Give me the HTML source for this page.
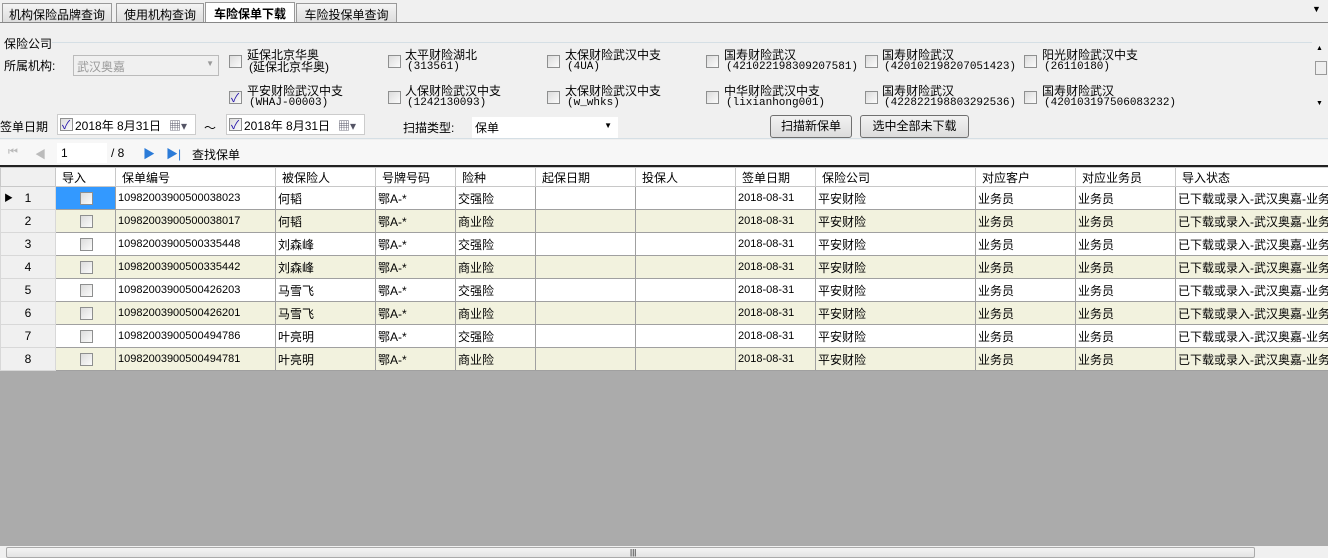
<!DOCTYPE html><html><head><meta charset="utf-8"><style>
*{margin:0;padding:0;box-sizing:border-box}
body{width:1328px;height:558px;background:#f0f0f0;font-family:"Liberation Sans","WenQuanYi Zen Hei","Noto Sans CJK SC",sans-serif;font-size:12px;color:#000;position:relative;overflow:hidden}
.a{position:absolute;white-space:nowrap}
.tab{position:absolute;top:3px;height:20px;border:1px solid #999;border-bottom:none;background:linear-gradient(#f4f4f4,#dcdcdc);padding:2px 0;text-align:center;font-size:12px;white-space:nowrap}
.cb{position:absolute;width:13px;height:13px;border:1px solid #8e8f8f;background:linear-gradient(135deg,#dcdcdc,#fbfbfb)}
.ck::after{content:"✓";position:absolute;left:1px;top:-3px;font-size:12px;color:#21a}
.l1{font-size:12px;line-height:13px}
.l2{font-size:11px;line-height:12px;font-family:"Liberation Mono","WenQuanYi Zen Hei",monospace}
.btn{position:absolute;height:23px;border:1px solid #707070;border-radius:3px;background:linear-gradient(#f2f2f2,#dcdcdc);text-align:center;line-height:21px}
table{position:absolute;left:0;top:167px;border-collapse:collapse;table-layout:fixed;width:1335px}
td{border:1px solid #a0a0a0;height:23px;padding:0 2px;white-space:nowrap;overflow:hidden;font-size:12px;background:#fff}
tr.h td{height:19px;background:#fff;border-color:#c8c8c8;padding-left:6px}
tr.b td{background:#f2f2de}
td.rh{background:#f0f0f0!important;text-align:center;border-color:#d8d8d8;position:relative}
td.n{font-size:11px}
</style></head><body>
<div class="tab" style="left:2px;width:110px">机构保险品牌查询</div>
<div class="tab" style="left:116px;width:88px">使用机构查询</div>
<div class="tab" style="left:205px;width:90px;background:#fff;font-weight:bold;top:2px;height:21px">车险保单下载</div>
<div class="tab" style="left:296px;width:101px">车险投保单查询</div>
<div class="a" style="left:1312px;top:4px;font-size:9px">▼</div>
<div class="a" style="left:0;top:22px;width:1328px;height:1px;background:#888"></div>
<div class="a" style="left:4px;top:35px">保险公司</div>
<div class="a" style="left:52px;top:42px;width:1260px;height:1px;background:#d5dfe5"></div>
<div class="a" style="left:4px;top:57px">所属机构:</div>
<div class="a" style="left:73px;top:55px;width:146px;height:21px;border:1px solid #bbb;background:#f0f0f0;color:#999;padding:2px 3px">武汉奥嘉<span style="position:absolute;right:4px;top:3px;font-size:8px">▼</span></div>
<div class="cb" style="left:229px;top:55px"></div><div class="a l1" style="left:247px;top:49px">延保北京华奥</div><div class="a l1" style="left:249px;top:61px">(延保北京华奥)</div>
<div class="cb" style="left:388px;top:55px"></div><div class="a l1" style="left:405px;top:49px">太平财险湖北</div><div class="a l2" style="left:407px;top:61px">(313561)</div>
<div class="cb" style="left:547px;top:55px"></div><div class="a l1" style="left:565px;top:49px">太保财险武汉中支</div><div class="a l2" style="left:567px;top:61px">(4UA)</div>
<div class="cb" style="left:706px;top:55px"></div><div class="a l1" style="left:724px;top:49px">国寿财险武汉</div><div class="a l2" style="left:726px;top:61px">(421022198309207581)</div>
<div class="cb" style="left:865px;top:55px"></div><div class="a l1" style="left:882px;top:49px">国寿财险武汉</div><div class="a l2" style="left:884px;top:61px">(420102198207051423)</div>
<div class="cb" style="left:1024px;top:55px"></div><div class="a l1" style="left:1042px;top:49px">阳光财险武汉中支</div><div class="a l2" style="left:1044px;top:61px">(26110180)</div>
<div class="cb ck" style="left:229px;top:91px"></div><div class="a l1" style="left:247px;top:85px">平安财险武汉中支</div><div class="a l2" style="left:249px;top:97px">(WHAJ-00003)</div>
<div class="cb" style="left:388px;top:91px"></div><div class="a l1" style="left:405px;top:85px">人保财险武汉中支</div><div class="a l2" style="left:407px;top:97px">(1242130093)</div>
<div class="cb" style="left:547px;top:91px"></div><div class="a l1" style="left:565px;top:85px">太保财险武汉中支</div><div class="a l2" style="left:567px;top:97px">(w_whks)</div>
<div class="cb" style="left:706px;top:91px"></div><div class="a l1" style="left:724px;top:85px">中华财险武汉中支</div><div class="a l2" style="left:726px;top:97px">(lixianhong001)</div>
<div class="cb" style="left:865px;top:91px"></div><div class="a l1" style="left:882px;top:85px">国寿财险武汉</div><div class="a l2" style="left:884px;top:97px">(422822198803292536)</div>
<div class="cb" style="left:1024px;top:91px"></div><div class="a l1" style="left:1042px;top:85px">国寿财险武汉</div><div class="a l2" style="left:1044px;top:97px">(420103197506083232)</div>
<div class="a" style="left:1313px;top:43px;width:15px;height:70px;background:#f0f0f0"><div style="position:absolute;left:2px;top:18px;width:12px;height:14px;border:1px solid #999;background:#eee"></div><div style="position:absolute;left:3px;top:2px;font-size:7px">▲</div><div style="position:absolute;left:3px;top:57px;font-size:7px">▼</div></div>
<div class="a" style="left:0;top:118px">签单日期</div>
<div class="a" style="left:57px;top:114px;width:139px;height:21px;border:1px solid #ccc;background:#fff"></div>
<div class="cb ck" style="left:60px;top:118px"></div><div class="a" style="left:75px;top:117px">2018年 8月31日</div><div class="a" style="left:169px;top:117px;color:#556">▦▾</div>
<div class="a" style="left:204px;top:119px">～</div>
<div class="a" style="left:226px;top:114px;width:139px;height:21px;border:1px solid #ccc;background:#fff"></div>
<div class="cb ck" style="left:229px;top:118px"></div><div class="a" style="left:244px;top:117px">2018年 8月31日</div><div class="a" style="left:338px;top:117px;color:#556">▦▾</div>
<div class="a" style="left:403px;top:119px">扫描类型:</div>
<div class="a" style="left:472px;top:117px;width:146px;height:21px;background:#fff;padding:2px 3px">保单<span style="position:absolute;right:6px;top:4px;font-size:8px">▼</span></div>
<div class="btn" style="left:770px;top:115px;width:82px">扫描新保单</div>
<div class="btn" style="left:860px;top:115px;width:109px">选中全部未下载</div>
<div class="a" style="left:0;top:138px;width:1328px;height:1px;background:#d5dfe5"></div>
<div class="a" style="left:0;top:140px;width:1328px;height:26px;background:#f7f7f7"></div>
<div class="a" style="left:8px;top:146px;color:#bbb;font-size:11px">⏮</div>
<div class="a" style="left:35px;top:146px;color:#bbb;font-size:11px">◀</div>
<div class="a" style="left:57px;top:143px;width:50px;height:20px;background:#fff;padding:3px 4px">1</div>
<div class="a" style="left:111px;top:146px">/ 8</div>
<div class="a" style="left:143px;top:145px;color:#2b7bd8;font-size:12px">▶</div>
<div class="a" style="left:166px;top:145px;color:#2b7bd8;font-size:12px">▶|</div>
<div class="a" style="left:192px;top:146px">查找保单</div>
<div class="a" style="left:0;top:165px;width:1328px;height:2px;background:#222"></div>
<div class="a" style="left:0;top:371px;width:1328px;height:175px;background:#ababab"></div>
<table>
<colgroup><col style="width:55px"><col style="width:60px"><col style="width:160px"><col style="width:100px"><col style="width:80px"><col style="width:80px"><col style="width:100px"><col style="width:100px"><col style="width:80px"><col style="width:160px"><col style="width:100px"><col style="width:100px"><col style="width:160px"></colgroup>
<tr class="h"><td class="rh"></td><td>导入</td><td>保单编号</td><td>被保险人</td><td>号牌号码</td><td>险种</td><td>起保日期</td><td>投保人</td><td>签单日期</td><td>保险公司</td><td>对应客户</td><td>对应业务员</td><td>导入状态</td></tr>
<tr><td class="rh"><span style="position:absolute;left:3px;font-size:9px">▶</span>1</td><td style="background:#3399ff"><div class="cb" style="position:relative;margin-left:22px"></div></td><td class="n">10982003900500038023</td><td>何韬</td><td>鄂A-*</td><td>交强险</td><td></td><td></td><td class="n">2018-08-31</td><td>平安财险</td><td>业务员</td><td>业务员</td><td>已下载或录入-武汉奥嘉-业务</td></tr>
<tr class="b"><td class="rh">2</td><td><div class="cb" style="position:relative;margin-left:22px"></div></td><td class="n">10982003900500038017</td><td>何韬</td><td>鄂A-*</td><td>商业险</td><td></td><td></td><td class="n">2018-08-31</td><td>平安财险</td><td>业务员</td><td>业务员</td><td>已下载或录入-武汉奥嘉-业务</td></tr>
<tr><td class="rh">3</td><td><div class="cb" style="position:relative;margin-left:22px"></div></td><td class="n">10982003900500335448</td><td>刘森峰</td><td>鄂A-*</td><td>交强险</td><td></td><td></td><td class="n">2018-08-31</td><td>平安财险</td><td>业务员</td><td>业务员</td><td>已下载或录入-武汉奥嘉-业务</td></tr>
<tr class="b"><td class="rh">4</td><td><div class="cb" style="position:relative;margin-left:22px"></div></td><td class="n">10982003900500335442</td><td>刘森峰</td><td>鄂A-*</td><td>商业险</td><td></td><td></td><td class="n">2018-08-31</td><td>平安财险</td><td>业务员</td><td>业务员</td><td>已下载或录入-武汉奥嘉-业务</td></tr>
<tr><td class="rh">5</td><td><div class="cb" style="position:relative;margin-left:22px"></div></td><td class="n">10982003900500426203</td><td>马雪飞</td><td>鄂A-*</td><td>交强险</td><td></td><td></td><td class="n">2018-08-31</td><td>平安财险</td><td>业务员</td><td>业务员</td><td>已下载或录入-武汉奥嘉-业务</td></tr>
<tr class="b"><td class="rh">6</td><td><div class="cb" style="position:relative;margin-left:22px"></div></td><td class="n">10982003900500426201</td><td>马雪飞</td><td>鄂A-*</td><td>商业险</td><td></td><td></td><td class="n">2018-08-31</td><td>平安财险</td><td>业务员</td><td>业务员</td><td>已下载或录入-武汉奥嘉-业务</td></tr>
<tr><td class="rh">7</td><td><div class="cb" style="position:relative;margin-left:22px"></div></td><td class="n">10982003900500494786</td><td>叶亮明</td><td>鄂A-*</td><td>交强险</td><td></td><td></td><td class="n">2018-08-31</td><td>平安财险</td><td>业务员</td><td>业务员</td><td>已下载或录入-武汉奥嘉-业务</td></tr>
<tr class="b"><td class="rh">8</td><td><div class="cb" style="position:relative;margin-left:22px"></div></td><td class="n">10982003900500494781</td><td>叶亮明</td><td>鄂A-*</td><td>商业险</td><td></td><td></td><td class="n">2018-08-31</td><td>平安财险</td><td>业务员</td><td>业务员</td><td>已下载或录入-武汉奥嘉-业务</td></tr>
</table>
<div class="a" style="left:0;top:546px;width:1328px;height:12px;background:#f0f0f0"><div style="position:absolute;left:6px;top:1px;width:1249px;height:11px;border:1px solid #aaa;border-radius:2px;background:linear-gradient(#f4f4f4,#e4e4e4)"></div><div style="position:absolute;left:630px;top:2px;font-size:8px">|||</div></div>
</body></html>
